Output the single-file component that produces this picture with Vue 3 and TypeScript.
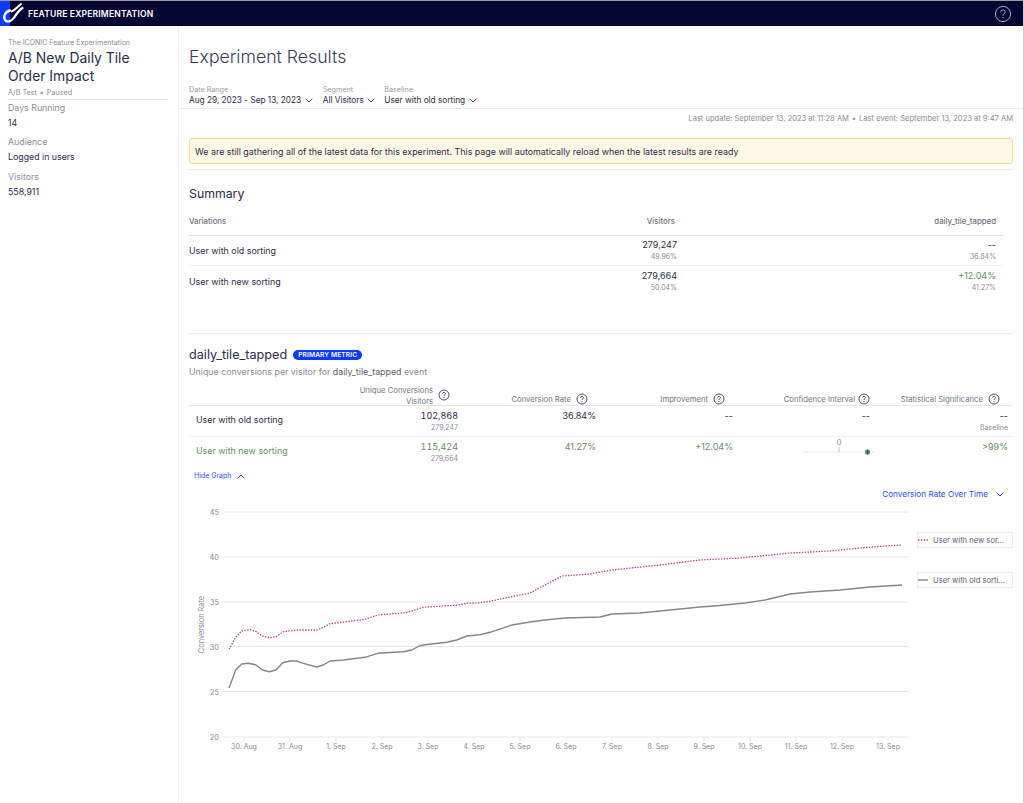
<script setup lang="ts">
type Pt = [number, number]
const oldPts: Pt[] = [[229,688],[235.7,670],[241.7,664],[248.3,663.3],[255.7,664.7],[262.3,670],[269.3,671.7],[276,670],[282.7,662.7],[290,661],[296.7,661],[303.3,663.3],[316.7,667],[323.3,665],[330,661],[343.3,660],[365,657.3],[377.7,653.3],[403.3,651.7],[411.7,650],[420,645.7],[425,644.7],[446.7,642.3],[456.7,640],[466.7,636],[480,634.7],[490,632.3],[512,625],[530,622],[545,620],[565,618],[600,617],[612,614],[640,613],[670,610],[700,607],[720,605.5],[745,603],[765,600],[790,594],[810,592],[840,590],[870,587],[902,585]]
const newPts: Pt[] = [[229,649.3],[235.7,637.3],[241.7,631],[250,629.7],[255.7,631.3],[262.3,636],[270,637.7],[276,636.7],[283.3,631.7],[296.7,630],[316.7,630],[323.3,627.3],[330,623.7],[346.7,621.7],[365,619.3],[377.7,615],[403.3,613],[411.7,611],[423.3,607.3],[446.7,605.7],[456.7,605.3],[466.7,603.3],[480,602.7],[490,601.3],[510,597],[530,593],[545,585],[562,576],[590,574],[612,570],[640,567],[660,565],[700,560],[740,558],[770,555],[790,553],[830,551],[860,548],[885,546],[902,545]]
const toLine = (p: Pt[]) => p.map(([x, y]) => `${x - 189},${y - 505}`).join(' ')
const oldLine = toLine(oldPts)
const newLine = toLine(newPts)
const yTicks = [
  { v: 45, y: 7 }, { v: 40, y: 52 }, { v: 35, y: 97 },
  { v: 30, y: 141.5 }, { v: 25, y: 186.5 }, { v: 20, y: 232 }
]
const xLabels = ['30. Aug','31. Aug','1. Sep','2. Sep','3. Sep','4. Sep','5. Sep','6. Sep','7. Sep','8. Sep','9. Sep','10. Sep','11. Sep','12. Sep','13. Sep']
const xTicks = xLabels.map((label, i) => ({ label, x: 55 + i * 46 }))
const filters = [
  { label: 'Date Range', value: 'Aug 29, 2023 - Sep 13, 2023' },
  { label: 'Segment', value: 'All Visitors' },
  { label: 'Baseline', value: 'User with old sorting' }
]
const sideInfo = [
  { label: 'Days Running', value: '14' },
  { label: 'Audience', value: 'Logged in users' },
  { label: 'Visitors', value: '558,911' }
]
const summaryRows = [
  { name: 'User with old sorting', visitors: '279,247', share: '49.96%', lift: '--', rate: '36.84%', good: false },
  { name: 'User with new sorting', visitors: '279,664', share: '50.04%', lift: '+12.04%', rate: '41.27%', good: true }
]
</script>

<template>
  <div class="page">
    <header class="topbar">
      <div class="logo-block">
        <svg class="logo" viewBox="0 0 26 26" width="26" height="26" fill="none" stroke="#fff" stroke-linecap="round">
          <path d="M10 10.5C5 11.5 3 17 5 20C7.5 23 12 21 14.5 17C16.5 14 19 10 22.5 8" stroke-width="2.3" />
          <path d="M11.5 11.5C15 10.5 17 7 21 4" stroke-width="2" />
        </svg>
      </div>
      <span class="product">FEATURE EXPERIMENTATION</span>
      <svg class="help" viewBox="0 0 18 18" width="18" height="18" fill="none" stroke="#a9aab8" stroke-width="1">
        <circle cx="9" cy="9" r="7.6" />
        <path d="M6.8 7C6.9 5.6 7.9 5 9 5C10.3 5 11.2 5.8 11.2 6.9C11.2 8.4 9 8.6 9 10.4" stroke-linecap="round" />
        <circle cx="9" cy="12.6" r="0.6" fill="#a9aab8" stroke="none" />
      </svg>
    </header>
    <div class="body">
      <aside class="side">
        <div class="side-head">
          <div class="project">The ICONIC Feature Experimentation</div>
          <h2 class="exp-title">A/B New Daily Tile Order Impact</h2>
          <div class="exp-meta">A/B Test <span class="dot">•</span> Paused</div>
        </div>
        <div v-for="i in sideInfo" :key="i.label" class="side-item">
          <div class="side-label">{{ i.label }}</div>
          <div class="side-value">{{ i.value }}</div>
        </div>
      </aside>
      <main class="main">
        <h1 class="title">Experiment Results</h1>
        <div class="filters">
          <div v-for="f in filters" :key="f.label" class="filter">
            <div class="filter-label">{{ f.label }}</div>
            <div class="filter-value">
              {{ f.value }}
              <svg class="chev" viewBox="0 0 8 5" width="8" height="5"><path d="M.7.8 4 4 7.3.8" fill="none" stroke="#3a3b57" stroke-width=".9" /></svg>
            </div>
          </div>
        </div>
        <div class="content">
          <div class="updated">Last update: September 13, 2023 at 11:28 AM <span class="dot">•</span> Last event: September 13, 2023 at 9:47 AM</div>
          <div class="alert">We are still gathering all of the latest data for this experiment. This page will automatically reload when the latest results are ready</div>

          <section class="summary">
            <h3 class="section-title">Summary</h3>
            <div class="sum-row sum-head">
              <div>Variations</div><div class="r vis-h">Visitors</div><div class="r">daily_tile_tapped</div>
            </div>
            <div v-for="r in summaryRows" :key="r.name" class="sum-row sum-body">
              <div class="sum-name">{{ r.name }}</div>
              <div class="r"><div class="num">{{ r.visitors }}</div><div class="sub">{{ r.share }}</div></div>
              <div class="r"><div class="num" :class="{ good: r.good }">{{ r.lift }}</div><div class="sub">{{ r.rate }}</div></div>
            </div>
          </section>

          <section class="metric">
            <div class="metric-head">
              <h3 class="metric-name">daily_tile_tapped</h3>
              <span class="badge">PRIMARY METRIC</span>
            </div>
            <p class="metric-desc">Unique conversions per visitor for <span class="strong">daily_tile_tapped</span> event</p>

            <div class="d-row d-head">
              <div></div>
              <div class="hcell">
                <span class="two">Unique Conversions<br />Visitors</span>
                <svg class="q" viewBox="0 0 12 12" width="12" height="12"><circle cx="6" cy="6" r="5" fill="none" stroke="#3a3b57" stroke-width=".9" /><path d="M4.5 4.7C4.6 3.8 5.2 3.4 6 3.4C6.8 3.4 7.5 3.9 7.5 4.7C7.5 5.7 6 5.8 6 7" fill="none" stroke="#3a3b57" stroke-width=".9" /><circle cx="6" cy="8.6" r=".5" fill="#3a3b57" /></svg>
              </div>
              <div v-for="h in ['Conversion Rate','Improvement','Confidence Interval','Statistical Significance']" :key="h" class="hcell">
                <span>{{ h }}</span>
                <svg class="q" viewBox="0 0 12 12" width="12" height="12"><circle cx="6" cy="6" r="5" fill="none" stroke="#3a3b57" stroke-width=".9" /><path d="M4.5 4.7C4.6 3.8 5.2 3.4 6 3.4C6.8 3.4 7.5 3.9 7.5 4.7C7.5 5.7 6 5.8 6 7" fill="none" stroke="#3a3b57" stroke-width=".9" /><circle cx="6" cy="8.6" r=".5" fill="#3a3b57" /></svg>
              </div>
            </div>
            <div class="d-row d-body">
              <div class="d-name">User with old sorting</div>
              <div class="r conv"><div class="num">102,868</div><div class="sub">279,247</div></div>
              <div class="r"><div class="num">36.84%</div></div>
              <div class="r"><div class="num">--</div></div>
              <div class="r"><div class="num">--</div></div>
              <div class="r"><div class="num">--</div><div class="sub">Baseline</div></div>
            </div>
            <div class="d-row d-body good">
              <div class="d-name">User with new sorting</div>
              <div class="r conv"><div class="num">115,424</div><div class="sub">279,664</div></div>
              <div class="r"><div class="num">41.27%</div></div>
              <div class="r"><div class="num">+12.04%</div></div>
              <div class="r ci">
                <svg viewBox="0 0 70 20" width="70" height="20">
                  <text x="35" y="7" text-anchor="middle" class="ci-zero">0</text>
                  <line x1="0" x2="70" y1="14" y2="14" stroke="#e6e6ea" />
                  <line x1="35" x2="35" y1="9.5" y2="14" stroke="#b5b5bf" stroke-width=".8" />
                  <circle cx="63.5" cy="14" r="2.6" fill="#5f8f62" />
                  <line x1="63.5" x2="63.5" y1="11.5" y2="16.5" stroke="#3a3b57" stroke-width=".8" />
                </svg>
              </div>
              <div class="r"><div class="num">&gt;99%</div></div>
            </div>
            <div class="hide-graph">
              Hide Graph
              <svg viewBox="0 0 8 5" width="8" height="5"><path d="M.7 4.2 4 1 7.3 4.2" fill="none" stroke="#0037ff" stroke-width=".9" /></svg>
            </div>
            <div class="chart-select">
              Conversion Rate Over Time
              <svg viewBox="0 0 8 5" width="8" height="5"><path d="M.7.8 4 4 7.3.8" fill="none" stroke="#0037ff" stroke-width=".9" /></svg>
            </div>

            <div class="chart">
              <svg class="plot" viewBox="0 0 725 260" width="725" height="260">
                <g v-for="t in yTicks" :key="t.v">
                  <line x1="33" x2="719" :y1="t.y" :y2="t.y" stroke="#e8e8ec" />
                  <text x="30" :y="t.y + 3" text-anchor="end" class="tick">{{ t.v }}</text>
                </g>
                <text class="axis" transform="translate(15 119.5) rotate(-90)" text-anchor="middle">Conversion Rate</text>
                <g v-for="t in xTicks" :key="t.label">
                  <line :x1="t.x" :x2="t.x" y1="232" y2="237" stroke="#e8e8ec" />
                  <text :x="t.x" y="244" text-anchor="middle" class="tick x">{{ t.label }}</text>
                </g>
                <polyline :points="newLine" fill="none" stroke="#b8447f" stroke-width="1.3" stroke-dasharray="1.4 1.4" />
                <polyline :points="oldLine" fill="none" stroke="#86858f" stroke-width="1.4" stroke-linejoin="round" />
              </svg>
              <div class="legend">
                <div class="leg-item">
                  <svg viewBox="0 0 10 2" width="10" height="2"><line x1="0" x2="10" y1="1" y2="1" stroke="#b8447f" stroke-width="1.3" stroke-dasharray="1.4 1.4" /></svg>
                  <span>User with new sor...</span>
                </div>
                <div class="leg-item">
                  <svg viewBox="0 0 10 2" width="10" height="2"><line x1="0" x2="10" y1="1" y2="1" stroke="#86858f" stroke-width="1.4" /></svg>
                  <span>User with old sorti...</span>
                </div>
              </div>
            </div>
          </section>
        </div>
      </main>
    </div>
  </div>
</template>

<style>
html, body { margin: 0; background: #fff; }
</style>

<style scoped>
.page {
  width: 1024px; height: 803px; overflow: hidden; box-sizing: border-box;
  font-family: Inter, "Liberation Sans", sans-serif; color: #2c2d4a;
  font-size: 9px; background: #fff; border-right: 1px solid #cfcfd3;
}
h1, h2, h3, p { margin: 0; font-weight: 400; }
.topbar {
  height: 26px; box-sizing: border-box; background: #060633; border-top: 1px solid #9a9aa3;
  display: flex; align-items: center; color: #fff;
}
.logo-block { width: 10px; height: 25px; background: #0a3bff; position: relative; flex: none; }
.logo { position: absolute; left: 0; top: -1px; }
.product { margin-left: 18px; font-size: 8.55px; font-weight: 600; letter-spacing: .02em; }
.help { margin-left: auto; margin-right: 11px; }
.body { display: flex; height: 777px; }
.side { width: 179px; flex: none; box-sizing: border-box; border-right: 1px solid #eeeef0; padding: 12px 10px 0 8px; }
.side-head { border-bottom: 1px solid #e6e6e9; padding-bottom: 1px; margin-bottom: 2px; }
.project { font-size: 7px; line-height: 9px; color: #8a8a96; }
.exp-title { font-size: 13.9px; line-height: 18px; margin-top: 1.5px; color: #2c2d4a; }
.exp-meta { font-size: 7.2px; line-height: 10px; color: #8a8a96; margin-top: 3px; }
.dot { font-size: 7px; margin: 0 1px; }
.side-item { margin-bottom: 7.5px; }
.side-label { font-size: 8.8px; line-height: 12px; color: #8d8d98; }
.side-value { font-size: 8.8px; line-height: 12px; margin-top: 3px; color: #2c2d4a; }
.main { flex: 1; min-width: 0; display: flex; flex-direction: column; }
.title { font-size: 17.7px; font-weight: 300; line-height: 24px; margin: 19px 0 0 10px; color: #3a3b57; }
.filters { display: flex; gap: 10px; padding: 16px 0 0 10px; height: 40px; box-sizing: border-box; border-bottom: 1px solid #ececef; }
.filter:last-child { margin-left: -1px; }
.filter-label { font-size: 7.2px; line-height: 10px; color: #9a9aa4; }
.filter-value { font-size: 8.25px; line-height: 11px; display: flex; align-items: center; gap: 3.5px; color: #2c2d4a; }
.chev { margin-top: -1px; }
.content { padding: 0 10px; flex: 1; }
.updated { font-size: 7.55px; line-height: 10px; color: #8a8a96; text-align: right; margin-top: 5px; }
.alert {
  margin-top: 14px; height: 26px; box-sizing: border-box; background: #fff8e7; border: 1px solid #f9dc82; border-radius: 3px;
  padding: 0 5px; display: flex; align-items: center; font-size: 8.88px; color: #2c2d4a;
}
.summary { border-top: 1px solid #ececef; margin-top: 5px; height: 165px; box-sizing: border-box; border-bottom: 1px solid #ececef; }
.section-title { font-size: 12.3px; line-height: 16px; margin-top: 16px; color: #2c2d4a; }
.sum-row { display: grid; grid-template-columns: 1fr 180px 326px; width: 814px; box-sizing: border-box; }
.sum-row > :nth-child(3) { padding-right: 7px; }
.vis-h { padding-right: 2px; }
.r { text-align: right; }
.sum-head { font-size: 7.8px; font-weight: 500; color: #6f6f7c; margin-top: 14px; height: 20px; line-height: 10px; border-bottom: 1px solid #e6e6e9; }
.sum-body { height: 30px; border-bottom: 1px solid #f1f1f3; align-items: center; }
.sum-body:last-child { border-bottom: 0; }
.sum-name { font-size: 8.9px; }
.num { font-size: 9px; line-height: 12px; }
.sub { font-size: 7px; line-height: 10px; color: #8a8a96; margin-top: 1px; }
.good, .good .num, .good .d-name { color: #5f8f62; }
.metric { padding-top: 11px; position: relative; }
.metric-head { display: flex; align-items: center; gap: 6px; height: 19px; }
.metric-name { font-size: 12.65px; color: #2c2d4a; }
.badge { background: #0a3bff; color: #fff; font-size: 6.6px; font-weight: 600; border-radius: 6px; padding: 0 5px; line-height: 10px; letter-spacing: .02em; }
.metric-desc { font-size: 8.85px; line-height: 12px; margin-top: 2px; color: #8a8a96; }
.strong { color: #5b5c72; }
.d-row { display: grid; grid-template-columns: 132px 137px 138px 137px 137px 138px; width: 823px; }
.d-head { height: 24px; border-bottom: 1px solid #e6e6e9; align-items: end; margin-top: 3px; }
.hcell { display: flex; justify-content: flex-end; align-items: center; gap: 5px; font-size: 7.7px; line-height: 11px; color: #75757f; padding: 0 8px 0 0; }
.hcell:nth-child(5) { padding-right: 0; gap: 3px; }
.two { text-align: right; margin-bottom: -2px; }
.q { flex: none; }
.d-body { height: 31px; border-bottom: 1px solid #f1f1f3; padding-top: 4px; box-sizing: border-box; }
.conv .num { font-variant-numeric: tabular-nums; }
.d-body.good { border-bottom: 0; }
.d-name { font-size: 8.9px; line-height: 20px; padding-left: 7px; }
.ci { display: flex; justify-content: flex-end; margin-right: -4px; margin-top: -3px; }
.ci-zero { font-size: 7.5px; fill: #8a8a96; font-family: Inter, "Liberation Sans", sans-serif; }
.hide-graph { color: #2d50f5; font-size: 7px; line-height: 10px; margin: 3px 0 0 5px; display: flex; align-items: center; gap: 6px; }
.chart-select { color: #2d50f5; font-size: 8.2px; line-height: 12px; display: flex; justify-content: flex-end; align-items: center; gap: 8px; margin: 7px 9px 0 0; }
.chart { position: relative; display: flex; margin-top: 5px; }
.plot { flex: none; overflow: visible; }
.tick { font-size: 7.4px; fill: #8a8a96; font-family: Inter, "Liberation Sans", sans-serif; }
.tick.x { font-size: 7px; }
.axis { font-size: 7.4px; fill: #8a8a96; font-family: Inter, "Liberation Sans", sans-serif; }
.legend { display: flex; flex-direction: column; gap: 24px; margin: 27px 0 0 3px; width: 96px; }
.leg-item { height: 16px; box-sizing: border-box; border: 1px solid #eeeef0; display: flex; align-items: center; gap: 5px; font-size: 7.6px; color: #5b5c72; white-space: nowrap; overflow: hidden; }
</style>
